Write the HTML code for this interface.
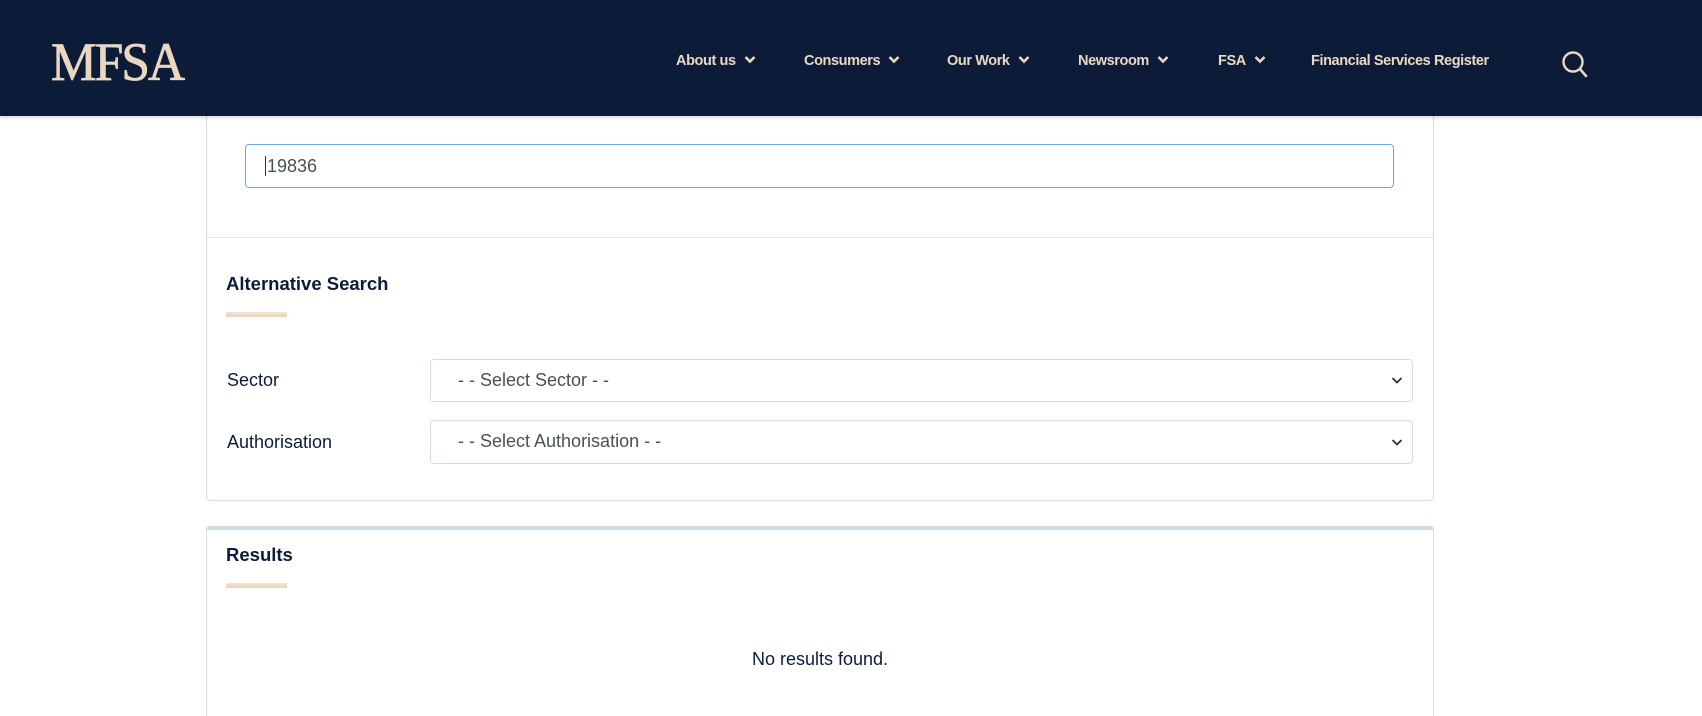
<!DOCTYPE html>
<html style="width:1702px;height:716px;overflow:hidden"><head><meta charset="utf-8"><style>
*{box-sizing:border-box;margin:0;padding:0}
body{width:1702px;height:716px;overflow:hidden;background:#fff;font-family:"Liberation Sans",sans-serif;color:#0c1b38;position:relative}
.hdr{position:absolute;left:0;top:0;width:1702px;height:116px;background:#0c1c38;box-shadow:0 2px 3px rgba(0,0,0,.15);z-index:2}
.logo{position:absolute;left:51px;top:35px;font-family:"Liberation Serif",serif;font-size:54px;color:#ead7c0;letter-spacing:-2px;line-height:54px;transform:scaleX(0.95);transform-origin:left;-webkit-text-stroke:0.8px #ead7c0}
.nav{position:absolute;top:53px;font-size:14.5px;font-weight:bold;color:#ead7c0;letter-spacing:-.4px;white-space:nowrap}
.nav svg{vertical-align:middle;margin-left:8px;margin-top:-3px}
.card{position:absolute;left:206px;width:1228px;border:1px solid #d5dde5;border-radius:4px;background:#fff}
.inp{position:absolute;border:1px solid #d5dde5;border-radius:4px;font-size:18px;color:#495057}
h3{position:absolute;font-size:18.5px;font-weight:bold;color:#0c1b38}
.ul{position:absolute;width:61px;height:5px;background:linear-gradient(#f3e4d1,#e6d3bb)}
.lbl{position:absolute;font-size:18px}
</style></head><body>
<div class="hdr">
<div class="logo">MFSA</div>
<div class="nav" style="left:676px">About us<svg width="12" height="9" viewBox="0 0 12 9"><path d="M1.5 2l4.5 4.5 4.5-4.5" stroke="#ead7c0" stroke-width="2.6" fill="none"/></svg></div>
<div class="nav" style="left:804px">Consumers<svg width="12" height="9" viewBox="0 0 12 9"><path d="M1.5 2l4.5 4.5 4.5-4.5" stroke="#ead7c0" stroke-width="2.6" fill="none"/></svg></div>
<div class="nav" style="left:947px">Our Work<svg width="12" height="9" viewBox="0 0 12 9"><path d="M1.5 2l4.5 4.5 4.5-4.5" stroke="#ead7c0" stroke-width="2.6" fill="none"/></svg></div>
<div class="nav" style="left:1078px">Newsroom<svg width="12" height="9" viewBox="0 0 12 9"><path d="M1.5 2l4.5 4.5 4.5-4.5" stroke="#ead7c0" stroke-width="2.6" fill="none"/></svg></div>
<div class="nav" style="left:1218px">FSA<svg width="12" height="9" viewBox="0 0 12 9"><path d="M1.5 2l4.5 4.5 4.5-4.5" stroke="#ead7c0" stroke-width="2.6" fill="none"/></svg></div>
<div class="nav" style="left:1311px">Financial Services Register</div>
<svg style="position:absolute;left:1561px;top:50px" width="28" height="30" viewBox="0 0 28 30"><circle cx="12" cy="12" r="9.5" stroke="#ead7c0" stroke-width="2.4" fill="none"/><path d="M19 19l6 7" stroke="#ead7c0" stroke-width="2.6" stroke-linecap="round"/></svg>
</div>

<div class="card" style="top:90px;height:411px">
<div style="position:absolute;left:0;right:0;top:146px;border-top:1px solid #e3e7eb"></div>
</div>
<div class="inp" style="left:245px;top:144px;width:1149px;height:44px;border-color:#6aaae4;padding:11px 0 0 19px"><span style="border-left:1px solid #333;padding-left:1px">19836</span></div>
<h3 style="left:226px;top:273px">Alternative Search</h3>
<div class="ul" style="left:226px;top:312px"></div>
<div class="lbl" style="left:227px;top:370px">Sector</div>
<div class="inp" style="left:430px;top:359px;width:983px;height:43px;padding:10px 0 0 27px">- - Select Sector - -</div>
<div class="lbl" style="left:227px;top:432px">Authorisation</div>
<div class="inp" style="left:430px;top:420px;width:983px;height:44px;padding:10px 0 0 27px">- - Select Authorisation - -</div>
<svg style="position:absolute;left:1391px;top:376px" width="12" height="9" viewBox="0 0 12 9"><path d="M1.5 2l4.5 4.5 4.5-4.5" stroke="#333" stroke-width="1.8" fill="none"/></svg>
<svg style="position:absolute;left:1391px;top:438px" width="12" height="9" viewBox="0 0 12 9"><path d="M1.5 2l4.5 4.5 4.5-4.5" stroke="#333" stroke-width="1.8" fill="none"/></svg>

<div class="card" style="top:526px;height:200px;border-top:4px solid #d0dbe4"></div>
<h3 style="left:226px;top:544px">Results</h3>
<div class="ul" style="left:226px;top:583px"></div>
<div class="lbl" style="left:0;width:1640px;text-align:center;top:649px">No results found.</div>
</body></html>
